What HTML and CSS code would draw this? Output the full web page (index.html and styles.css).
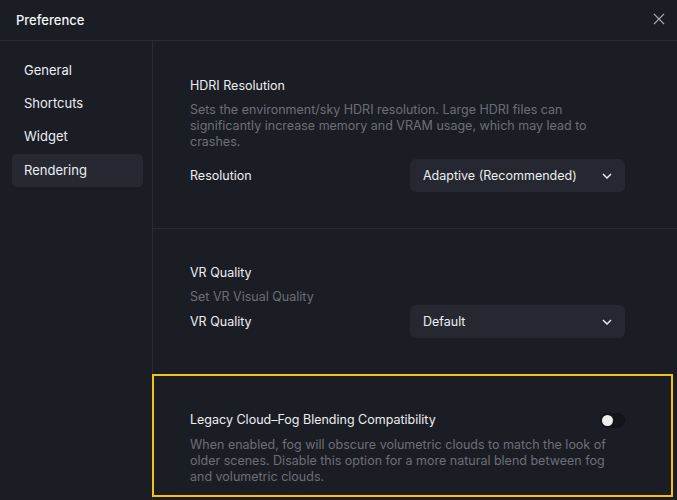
FILE: index.html
```html
<!DOCTYPE html>
<html lang="en">

<head>
    <meta charset="UTF-8">
    <meta name="viewport" content="width=device-width, initial-scale=1.0">
    <title>Preference</title>
    <link rel="stylesheet" href="styles.css">
</head>

<body>
    <div class="dialog">
        <div class="header">
            <div class="header-title">Preference</div>
            <div class="close">
                <svg width="12" height="12" viewBox="0 0 12 12">
                    <path d="M1 1L11 11M11 1L1 11" stroke="#a3a5ab" stroke-width="1.2" fill="none" />
                </svg>
            </div>
        </div>

        <div class="body">
            <div class="sidebar">
                <div class="nav-item">General</div>
                <div class="nav-item">Shortcuts</div>
                <div class="nav-item">Widget</div>
                <div class="nav-item active">Rendering</div>
            </div>

            <div class="content">
                <div class="section section-hdri">
                    <div class="section-title">HDRI Resolution</div>
                    <div class="section-description">Sets the environment/sky HDRI resolution. Large HDRI files can significantly increase memory and VRAM usage, which may lead to crashes.</div>
                    <div class="row">
                        <div class="row-label">Resolution</div>
                        <div class="select">
                            <span>Adaptive (Recommended)</span>
                            <svg width="10" height="6" viewBox="0 0 10 6">
                                <path d="M1 1L5 5L9 1" stroke="#e6e7ea" stroke-width="1.5" fill="none" />
                            </svg>
                        </div>
                    </div>
                </div>

                <div class="section section-vr">
                    <div class="section-title">VR Quality</div>
                    <div class="section-description">Set VR Visual Quality</div>
                    <div class="row">
                        <div class="row-label">VR Quality</div>
                        <div class="select">
                            <span>Default</span>
                            <svg width="10" height="6" viewBox="0 0 10 6">
                                <path d="M1 1L5 5L9 1" stroke="#e6e7ea" stroke-width="1.5" fill="none" />
                            </svg>
                        </div>
                    </div>
                </div>

                <div class="section section-fog">
                    <div class="title-row">
                        <div class="section-title">Legacy Cloud–Fog Blending Compatibility</div>
                        <div class="toggle"><div class="toggle-knob"></div></div>
                    </div>
                    <div class="section-description">When enabled, fog will obscure volumetric clouds to match the look of older scenes. Disable this option for a more natural blend between fog and volumetric clouds.</div>
                </div>
            </div>
        </div>
    </div>
</body>

</html>
```

FILE: styles.css
```css
body {
    font-family: Inter, 'Noto Sans', sans-serif;
    margin: 0;
    background-color: #1b1d25;
    color: #eceef1;
    font-size: 12.5px;
    overflow: hidden;
}

.dialog {
    width: 677px;
    height: 500px;
}

.header {
    height: 40px;
    border-bottom: 1px solid #2a2c34;
    display: flex;
    align-items: center;
    justify-content: space-between;
    padding: 0 12px 0 16px;
}

.header-title {
    font-size: 13px;
    font-weight: 500;
    color: #f3f4f6;
}

.close {
    width: 12px;
    height: 12px;
    display: flex;
    margin-top: -2px;
}

.body {
    display: flex;
    height: 459px;
}

.sidebar {
    width: 131px;
    padding: 13px 9px 0 12px;
    border-right: 1px solid #2a2c34;
}

.nav-item {
    height: 33px;
    line-height: 33px;
    padding-left: 12px;
    border-radius: 5px;
    font-size: 13px;
    color: #eceef1;
}

.nav-item.active {
    margin-top: 1px;
    background-color: #262932;
}

.content {
    flex: 1;
    display: flex;
    flex-direction: column;
}

.section {
    padding: 36px 52px 36px 37px;
}

.section-hdri {
    border-bottom: 1px solid #2a2c34;
}

.section-vr {
    padding-top: 35px;
}

.section-title {
    line-height: 18px;
    color: #eceef1;
}

.section-description {
    margin-top: 7px;
    line-height: 16px;
    color: #6c6f78;
}

.row {
    display: flex;
    align-items: center;
    justify-content: space-between;
}

.section-hdri .row {
    margin-top: 9px;
}

.select {
    width: 215px;
    height: 33px;
    box-sizing: border-box;
    background-color: #252830;
    border-radius: 6px;
    display: flex;
    align-items: center;
    justify-content: space-between;
    padding: 0 13px 0 13px;
}

.section-fog {
    margin: 0 4px 0 -1px;
    border: 2px solid #f5c211;
    padding: 35px 46px 10px 36px;
}

.section-fog .section-description {
    margin-top: 8px;
}

.title-row {
    display: flex;
    align-items: center;
    justify-content: space-between;
}

.toggle {
    width: 25px;
    height: 15px;
    border-radius: 8px;
    background-color: #13141a;
    display: flex;
    align-items: center;
    padding-left: 2px;
    box-sizing: border-box;
}

.toggle-knob {
    width: 11px;
    height: 11px;
    border-radius: 50%;
    background-color: #eeeeee;
}
```
